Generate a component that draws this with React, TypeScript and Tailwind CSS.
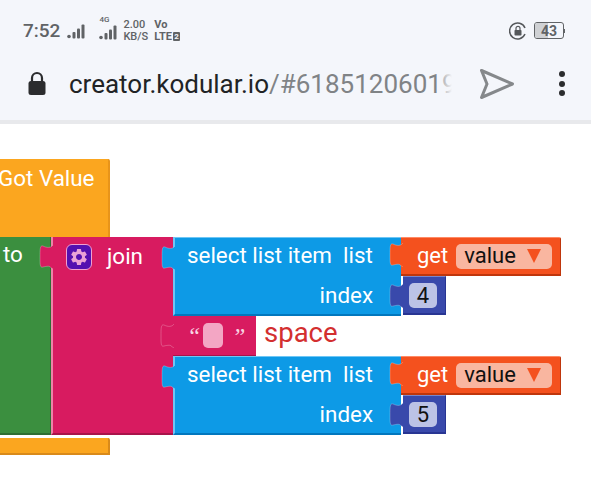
import { MdSettings } from "react-icons/md";

function Tab({ fill, className }: { fill: string; className: string }) {
  return (
    <svg viewBox="0 0 14 24" className={`absolute h-[24px] w-[14px] ${className}`}>
      <path
        d="M14 0C12 3 8 3 4 1C1 0 1 4 1 12C1 20 1 23 4 22C8 21 11 21 11 22L14 24Z"
        className={fill}
      />
      <path
        d="M14 0C12 3 8 3 4 1C1 0 1 4 1 12C1 20 1 23 4 22C8 21 11 21 11 22L14 24"
        fill="none"
        stroke="#ffffff"
        strokeOpacity="0.3"
        strokeWidth="0.8"
      />
    </svg>
  );
}

function Signal({ color = "#606366" }: { color?: string }) {
  return (
    <svg width="19" height="15" viewBox="0 0 19 15">
      <circle cx="2" cy="12.5" r="1.8" fill={color} />
      <rect x="5.5" y="8" width="3" height="6.5" rx="1" fill={color} />
      <rect x="10" y="4.5" width="3" height="10" rx="1" fill={color} />
      <rect x="14.5" y="0.5" width="3" height="14" rx="1" fill={color} />
    </svg>
  );
}

function GetValue() {
  return (
    <div className="relative flex h-[39px] w-[160px] items-center rounded-tr-[2px] border-t border-r border-b-2 border-t-[#ff8a65] border-r-[#bf360c] border-b-[#bf360c] bg-[#f4511e] pl-[16px] text-white">
      <Tab fill="fill-[#f4511e]" className="-left-[12px] top-[5px]" />
      <span className="-mt-[2px]">get</span>
      <span className="ml-[8px] flex h-[25px] w-[96px] items-center rounded-[5px] bg-[#f9b6a0] pl-[8px] text-[#111111]">
        <span className="-mt-[1px]">value</span>
        <span className="ml-[11px] h-0 w-0 border-x-[7px] border-t-[14px] border-x-transparent border-t-[#f4511e]" />
      </span>
    </div>
  );
}

function IndexNumber({ value }: { value: string }) {
  return (
    <div className="relative ml-[2px] flex h-[39px] w-[43px] items-center border-t border-r border-b-2 border-t-[#7986cb] border-r-[#283593] border-b-[#283593] bg-[#3949ab] pl-[6px]">
      <Tab fill="fill-[#3949ab]" className="-left-[14px] top-[7px]" />
      <span className="flex h-[25px] w-[28px] items-center justify-center rounded-[5px] bg-[#bcc3e6] text-[#111111]">
        {value}
      </span>
    </div>
  );
}

function SelectItem({ value }: { value: string }) {
  return (
    <div className="flex items-start">
      <div className="relative h-[79px] w-[228px] border-t border-b-2 border-l-2 border-t-[#6ec6f5] border-b-[#0277bd] border-l-[#6ec6f5] bg-[#0d9ae6] text-[22.4px] text-white">
        <Tab fill="fill-[#0d9ae6]" className="-left-[14px] top-[8px]" />
        <div className="flex h-[36px] items-center pl-[12px] whitespace-pre">select list item  list</div>
        <div className="flex h-[40px] items-center justify-end pt-[3px] pr-[28px]">index</div>
      </div>
      <div>
        <GetValue />
        <IndexNumber value={value} />
      </div>
    </div>
  );
}

export default function App() {
  return (
    <div className="h-[499px] w-[591px] overflow-hidden bg-white font-['Roboto',sans-serif] text-[22px]">
      <header className="h-[124px] border-b-4 border-[#e8e9ec] bg-[#f4f6fb]">
        <div className="flex h-[60px] items-center pl-[23px] pr-[26px] pt-[1px] text-[#606366]">
          <span className="text-[19px] leading-none font-medium">7:52</span>
          <span className="ml-[7px] mt-[1px]">
            <Signal />
          </span>
          <span className="relative ml-[13px] mt-[4px]">
            <span className="absolute -top-[9px] left-[0px] text-[8px] leading-none font-medium">4G</span>
            <Signal />
          </span>
          <span className="ml-[5px] flex flex-col text-[11px] leading-[12px] font-medium">
            <span>2.00</span>
            <span>KB/S</span>
          </span>
          <span className="ml-[6px] flex flex-col text-[11px] leading-[12px] font-bold">
            <span>Vo</span>
            <span className="flex items-center">
              LTE
              <span className="ml-[1px] flex h-[9px] w-[7px] items-center justify-center rounded-[1px] bg-[#606366] text-[8px] text-[#f4f6fb]">
                2
              </span>
            </span>
          </span>
          <svg width="18" height="18" viewBox="0 0 18 18" fill="none" className="ml-auto">
            <path d="M16 12A8 8 0 1 1 16 6" stroke="#55585b" strokeWidth="1.5" />
            <rect x="5.5" y="8" width="7" height="5.5" rx="0.8" fill="#55585b" />
            <path d="M7 8V6.3a2 2 0 0 1 4 0V8" stroke="#55585b" strokeWidth="1.2" />
          </svg>
          <span className="relative ml-[7px] flex h-[17px] w-[30px] items-center justify-center overflow-hidden rounded-[3px] border border-[#606366] text-[14px] leading-none font-bold">
            <span className="absolute inset-y-0 left-0 w-[13px] bg-[#cfd1d4]" />
            <span className="relative">43</span>
          </span>
          <span className="h-[4px] w-[1px] bg-[#606366]" />
        </div>
        <div className="flex h-[47px] items-center pl-[28px]">
          <svg width="18" height="25" viewBox="0 0 18 25">
            <path d="M4 11V7a5 5 0 0 1 10 0v4" fill="none" stroke="#2b2c2e" strokeWidth="2.2" />
            <rect x="0.5" y="10" width="17" height="14" rx="2.5" fill="#2b2c2e" />
          </svg>
          <div className="relative ml-[23px] mt-[2px] w-[383px] overflow-hidden text-[26px] whitespace-nowrap text-[#808386]">
            <span className="text-[#212325]">creator.kodular.io</span>/#6185120601916
            <span className="absolute inset-y-0 right-0 w-[16px] bg-gradient-to-r from-transparent to-[#f4f6fb]" />
          </div>
          <svg width="36" height="32" viewBox="0 0 36 32" fill="none" className="ml-[27px]">
            <path d="M2.5 2.5L33.5 16L2.5 29.5L8 16Z" stroke="#85888b" strokeWidth="3" strokeLinejoin="round" />
          </svg>
          <div className="ml-[44px] flex flex-col gap-[3.5px]">
            <span className="size-[6px] rounded-full bg-[#2b2c2e]" />
            <span className="size-[6px] rounded-full bg-[#2b2c2e]" />
            <span className="size-[6px] rounded-full bg-[#2b2c2e]" />
          </div>
        </div>
      </header>

      <main className="pt-[35px]">
        <div className="h-[78px] w-[110px] rounded-tr-[2px] border-r-2 border-[#e8941a] bg-[#fba61f] pt-[3px] text-[22.4px] text-white">
          <span className="-ml-[2px] block">Got Value</span>
        </div>

        <div className="flex h-[198px] items-stretch">
          <div className="flex w-[51px] items-start border-r border-b-2 border-r-[#2e6e32] border-b-[#2e6e32] bg-[#3b8f3f] pt-[4px] text-[22.4px] text-white">
            <span className="ml-[3px] leading-[26px]">to</span>
          </div>
          <div className="relative w-[122px] border-b-2 border-l-2 border-b-[#a8134a] border-l-[#ee82a8] bg-[#d81b60] text-[22.4px] text-white">
            <Tab fill="fill-[#d81b60]" className="-left-[14px] top-[8px]" />
            <div className="flex items-center pt-[7px] pl-[13px]">
              <span className="flex size-[26px] items-center justify-center rounded-[6px] border border-[#f0a0d0] bg-[#5410b0]">
                <MdSettings className="size-[20px] text-[#eaa2d6]" />
              </span>
              <span className="-mt-[3px] ml-[15px] leading-[26px]">join</span>
            </div>
          </div>
          <div className="flex flex-col">
            <SelectItem value="4" />
            <div className="flex h-[40px] items-center">
              <div className="relative flex h-[40px] w-[83px] items-center border-b border-b-[#a8134a] bg-[#d81b60] pl-[14px] text-[#f8d5e2]">
                <Tab fill="fill-[#d81b60]" className="-left-[13px] top-[8px]" />
                <span className="w-[16px] text-[24px] italic font-['Liberation_Serif',serif]">“</span>
                <span className="h-[25px] w-[20px] rounded-[5px] bg-[#f3a6c4]" />
                <span className="ml-[9px] text-[24px] italic font-['Liberation_Serif',serif]">”</span>
              </div>
              <span className="-mt-[6px] ml-[8px] text-[27.5px] text-[#d32f2f]">space</span>
            </div>
            <SelectItem value="5" />
          </div>
        </div>

        <div className="mt-[3px] h-[17px] w-[110px] rounded-tr-[2px] border-r-2 border-b-2 border-[#d98a1a] bg-[#fba61f]" />
      </main>
    </div>
  );
}
